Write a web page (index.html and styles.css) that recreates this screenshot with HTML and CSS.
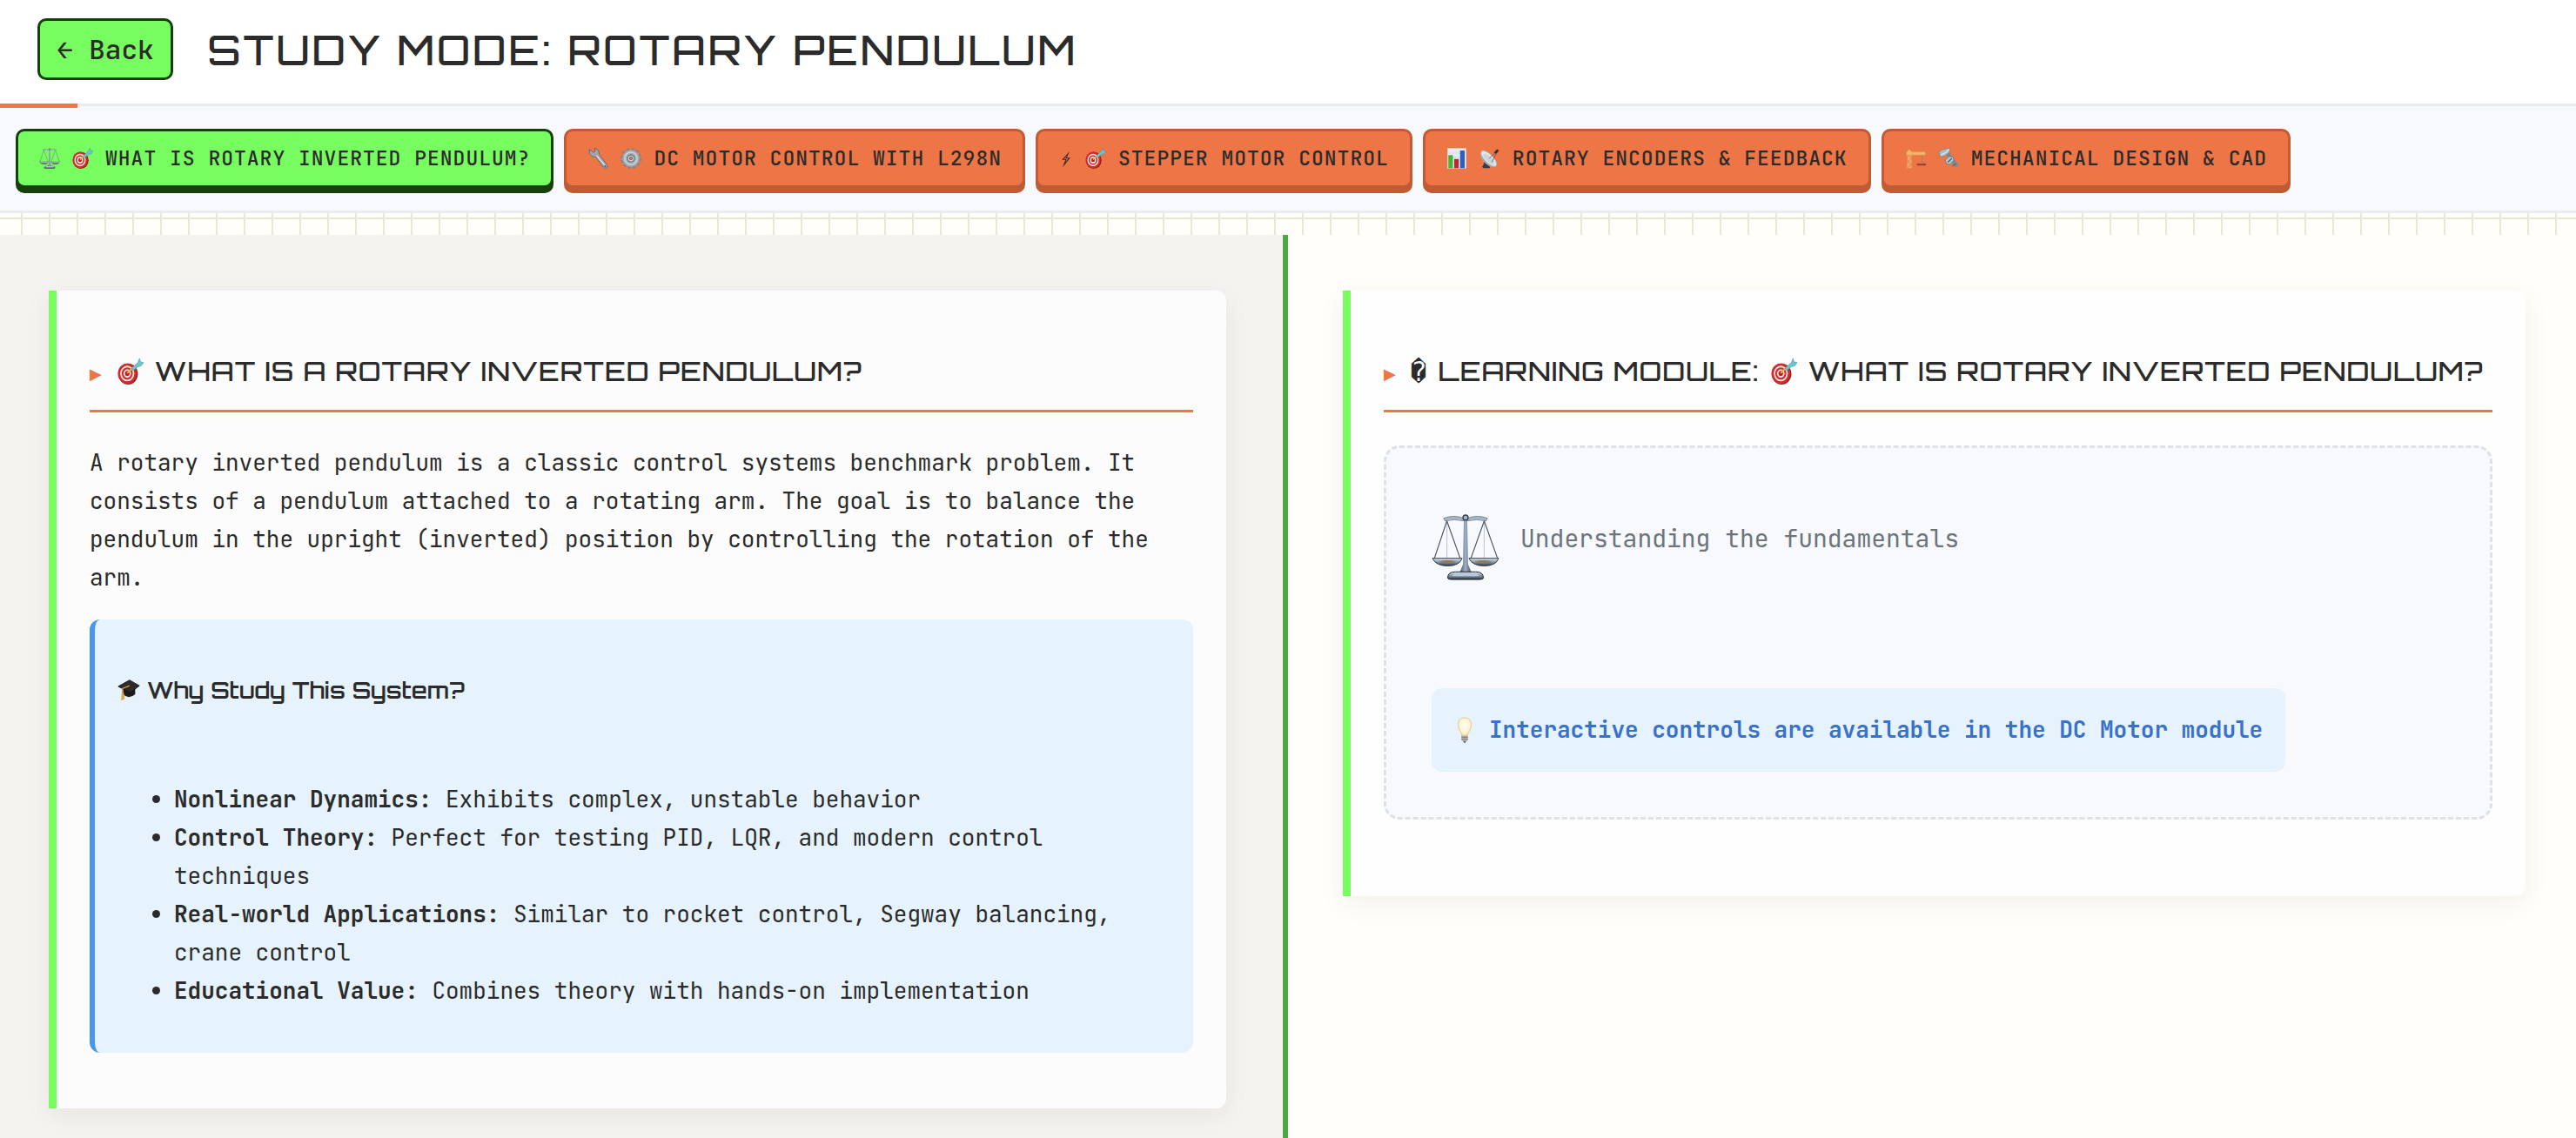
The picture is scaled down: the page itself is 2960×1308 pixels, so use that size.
FILE: index.html
```html
<!DOCTYPE html>
<html lang="en">
<head>
<meta charset="utf-8">
<meta name="viewport" content="width=device-width, initial-scale=1">
<title>Study Mode: Rotary Pendulum</title>
<link rel="stylesheet" href="styles.css">
</head>
<body>
<svg class="sprite" aria-hidden="true">
  <defs>
    <linearGradient id="steel" x1="0" x2="0" y1="0" y2="1">
      <stop offset="0" stop-color="#dfe8f0"/><stop offset=".5" stop-color="#8596aa"/><stop offset="1" stop-color="#2c3440"/>
    </linearGradient>
    <linearGradient id="post" x1="0" x2="1" y1="0" y2="0">
      <stop offset="0" stop-color="#3f4f66"/><stop offset=".5" stop-color="#9fb2ca"/><stop offset="1" stop-color="#3f4f66"/>
    </linearGradient>
    <radialGradient id="glow" cx=".5" cy=".4" r=".6">
      <stop offset="0" stop-color="#fffefa"/><stop offset=".7" stop-color="#fbf3cf"/><stop offset="1" stop-color="#ecd891"/>
    </radialGradient>
  </defs>
  <symbol id="i-scale" viewBox="0 0 80 80">
    <path d="M14 6q12-5 24 0h4q12-5 24 0l-2 3q-11-3-22 0h-4q-11-3-22 0z" fill="#a9b6c4" stroke="#66758a" stroke-width=".8"/>
    <path d="M18 9v45M62 9v45" stroke="#c3ccd8" stroke-width="1.2"/>
    <path d="M18 9L3 54M18 9l16 45M62 9L46 54M62 9l16 45" stroke="#4c5766" stroke-width="1.2" fill="none"/>
    <path d="M38 8h4l1 52 4 10H33l4-10z" fill="url(#post)"/>
    <circle cx="40" cy="5" r="3" fill="#a9b6c4" stroke="#39424f" stroke-width="1.5"/>
    <path d="M1 53h35q-3 9-17 9T1 53zM44 53h35q-3 9-17 9t-18-9z" fill="url(#steel)" stroke="#333c48" stroke-width="1"/>
    <path d="M9 57q10-3 20 0-10 4-20 0zM51 57q10-3 20 0-10 4-20 0z" fill="#8d7a60"/>
    <path d="M19 76q0-7 9-7h24q9 0 9 7 0 2-4 2H23q-4 0-4-2z" fill="url(#steel)" stroke="#1e242c"/>
    <path d="M27 71h26l3 3H24z" fill="#b9c9dd"/>
  </symbol>
  <symbol id="i-target" viewBox="0 0 32 32">
    <ellipse cx="13" cy="19" rx="12" ry="13" fill="#8f1d1c"/>
    <ellipse cx="12" cy="18.5" rx="11.5" ry="12.5" fill="#cf2f2c"/>
    <ellipse cx="12" cy="18.5" rx="8.6" ry="9.6" fill="#fbecec"/>
    <ellipse cx="12" cy="18.5" rx="6.8" ry="7.6" fill="#cf2f2c"/>
    <ellipse cx="12" cy="18.5" rx="4.6" ry="5.2" fill="#fbecec"/>
    <ellipse cx="12" cy="18.5" rx="2.8" ry="3.2" fill="#b8211f"/>
    <path d="M12 18l7-7" stroke="#e7b93f" stroke-width="2"/>
    <path d="M17 12l8-7 2-5 1 4 4 1-3 4-4 1-6 5z" fill="#6cc6cf" stroke="#3e8c99" stroke-width=".6"/>
  </symbol>
  <symbol id="i-wrench" viewBox="0 0 32 32">
    <path d="M3 2l6 5 3-2-1-5 6 4 1 6 12 16q2 4-1 5-3 1-5-2L13 14 7 13 3 9z" fill="#a0a6ac" stroke="#5f656c" stroke-width="1.200"/>
    <path d="M14 12l13 15" stroke="#dde0e4" stroke-width="1.600"/>
    <circle cx="27" cy="28" r="1.300" fill="#54585e"/>
  </symbol>
  <symbol id="i-gear" viewBox="0 0 32 32">
    <circle cx="16" cy="16" r="13.500" fill="none" stroke="#7d858d" stroke-width="5" stroke-dasharray="4.240 2.828"/>
    <circle cx="16" cy="16" r="9" fill="none" stroke="#a3abb2" stroke-width="8"/>
    <circle cx="16" cy="16" r="9.500" fill="none" stroke="#cfd5d9" stroke-width="2"/>
    <circle cx="16" cy="16" r="6" fill="#6a7279"/>
    <circle cx="16" cy="16" r="4.500" fill="#c9ced3"/>
    <circle cx="16" cy="16" r="2.200" fill="#ee7646" stroke="#555b61"/>
  </symbol>
  <symbol id="i-bolt" viewBox="0 0 16 32">
    <path d="M13 6L2 18h5L3 29l11-14H9z" fill="#3a2a22"/>
    <path d="M10 11l-5 6h4l-2 5 4-6H7z" fill="#ee7646"/>
  </symbol>
  <symbol id="i-chart" viewBox="0 0 32 32">
    <rect x="2" y="1" width="28" height="30" fill="#e6ecf4" stroke="#d3d9e2"/>
    <path d="M3 8h26M3 14h26M3 20h26" stroke="#cdd6e2"/>
    <rect x="3" y="11" width="7" height="20" fill="#4fae34"/>
    <rect x="12" y="17" width="7" height="14" fill="#b52a2e"/>
    <rect x="21" y="4" width="7" height="27" fill="#2d5fc0"/>
  </symbol>
  <symbol id="i-dish" viewBox="0 0 32 32">
    <path d="M6 18l1 6-3 5 2 2h10l-1-6z" fill="#353c44"/>
    <g transform="rotate(45 14 16)">
      <path d="M-1 16q1 9 15 9t16-9z" fill="#a4a9ae"/>
      <ellipse cx="14.500" cy="16" rx="16" ry="6.500" fill="#e3e5e6" stroke="#a1a6ab"/>
      <ellipse cx="15" cy="16.500" rx="11" ry="4" fill="#d0d3d6"/>
    </g>
    <path d="M15 16L27 5M19 22l7-15" stroke="#5b6167" stroke-width="1.200"/>
    <path d="M22 7l5-5 3 2-4 5z" fill="#3a2a26"/>
  </symbol>
  <symbol id="i-crane" viewBox="0 0 32 32">
    <path d="M4 7h6v24H3z" fill="#f0a763"/>
    <path d="M4 11l6 5-6 5 6 5-6 4" stroke="#cf7c3e" fill="none"/>
    <path d="M2 7l4-5 5 4h20v5H2z" fill="#f2b56b" stroke="#d99150"/>
    <path d="M26 11v12M22 24l4-4 4 4" stroke="#a9805f" stroke-width="1.200" fill="none"/>
    <path d="M18 24h14v3H18z" fill="#9c4433"/>
  </symbol>
  <symbol id="i-nut" viewBox="0 0 32 32">
    <path d="M12 10l5-3 14 18q0 4-5 5z" fill="#7f888f"/>
    <path d="M18 14l-5 4M23 20l-5 4M27 24l-5 4" stroke="#3f474d" stroke-width="1.200"/>
    <path d="M1 7l5-4 8-2 4 1-1 5-6 5-7 2z" fill="#a9bcc6" stroke="#6d7e88" stroke-width=".8"/>
    <path d="M4 11l8-4 5-5" stroke="#e3ecf0" stroke-width="1.500" fill="none"/>
    <path d="M11 19l6-6 6 1 1 5-5 6-6 0z" fill="#b3c1ca" stroke="#5b6a74" stroke-width=".8"/>
    <path d="M15 22l6-6" stroke="#48545d" stroke-width="1.500"/>
  </symbol>
  <symbol id="i-cap" viewBox="0 0 32 32">
    <path d="M8 13v9q8 8 17 0v-9z" fill="#1c1c1c"/>
    <path d="M1 11L17 2l14 8-13 10z" fill="#2b2b2b" stroke="#0f0f0f"/>
    <path d="M17 10L7 14v8" stroke="#d99a3b" stroke-width="1.800" fill="none"/>
    <path d="M6 20h3l1 9-5 2z" fill="#e0a548"/>
  </symbol>
  <symbol id="i-bulb" viewBox="4 0 24 32">
    <path d="M16 1q8 0 8 9 0 5-4 10l-1 4h-6l-1-4q-4-5-4-10 0-9 8-9z" fill="url(#glow)" stroke="#e3cb7c"/>
    <path d="M12 23h8v5l-2 2h-4l-2-2z" fill="#b0b0b0"/>
    <path d="M12 25h8M12 27.500h8" stroke="#7c7c7c"/>
    <path d="M14 30h4l-2 2z" fill="#333"/>
  </symbol>
</svg>

<header class="topbar">
  <button class="back" type="button">← Back</button>
  <h1 class="title">STUDY MODE: ROTARY PENDULUM</h1>
  <div class="progress"></div>
</header>

<nav class="tabs">
  <button class="tab tab-active" type="button"><svg class="icon"><use href="#i-scale"/></svg><svg class="icon"><use href="#i-target"/></svg>WHAT IS ROTARY INVERTED PENDULUM?</button>
  <button class="tab" type="button"><svg class="icon"><use href="#i-wrench"/></svg><svg class="icon"><use href="#i-gear"/></svg>DC MOTOR CONTROL WITH L298N</button>
  <button class="tab" type="button"><svg class="icon icon-narrow"><use href="#i-bolt"/></svg><svg class="icon"><use href="#i-target"/></svg>STEPPER MOTOR CONTROL</button>
  <button class="tab" type="button"><svg class="icon"><use href="#i-chart"/></svg><svg class="icon"><use href="#i-dish"/></svg>ROTARY ENCODERS &amp; FEEDBACK</button>
  <button class="tab" type="button"><svg class="icon"><use href="#i-crane"/></svg><svg class="icon"><use href="#i-nut"/></svg>MECHANICAL DESIGN &amp; CAD</button>
</nav>

<div class="grid-strip"></div>

<main class="panels">
  <section class="panel panel-theory">
    <article class="card">
      <h2 class="heading"><svg class="icon icon-heading"><use href="#i-target"/></svg>WHAT IS A ROTARY INVERTED PENDULUM?</h2>
      <p class="text">A rotary inverted pendulum is a classic control systems benchmark problem. It consists of a pendulum attached to a rotating arm. The goal is to balance the pendulum in the upright (inverted) position by controlling the rotation of the arm.</p>
      <div class="callout">
        <h3 class="subheading"><svg class="icon icon-cap"><use href="#i-cap"/></svg>Why Study This System?</h3>
        <ul class="reasons">
          <li><strong>Nonlinear Dynamics:</strong> Exhibits complex, unstable behavior</li>
          <li><strong>Control Theory:</strong> Perfect for testing PID, LQR, and modern control techniques</li>
          <li><strong>Real-world Applications:</strong> Similar to rocket control, Segway balancing, crane control</li>
          <li><strong>Educational Value:</strong> Combines theory with hands-on implementation</li>
        </ul>
      </div>
    </article>
  </section>
  <section class="panel panel-demo">
    <article class="card">
      <h2 class="heading"><span class="unknown">�</span>LEARNING MODULE:<svg class="icon icon-heading"><use href="#i-target"/></svg>WHAT IS ROTARY INVERTED PENDULUM?</h2>
      <div class="demo">
        <div class="demo-intro"><svg class="icon-large"><use href="#i-scale"/></svg><span>Understanding the fundamentals</span></div>
        <p class="hint"><svg class="icon icon-bulb"><use href="#i-bulb"/></svg>Interactive controls are available in the DC Motor module</p>
      </div>
    </article>
  </section>
</main>
</body>
</html>
```
FILE: styles.css
```css
:root {
  --ink: #2b2b2b;
  --green: #78fd60;
  --green-dark: #163f0c;
  --orange: #ee7646;
  --orange-dark: #bf5b35;
  --line: #e9ecef;
  --paper: #fffef8;
  --sky: #e6f3fd;
  --mono: "JetBrains Mono", "DejaVu Sans Mono", monospace;
  --display: Orbitron, "DejaVu Sans", sans-serif;
}

* { box-sizing: border-box; }

body {
  margin: 0;
  min-height: 100vh;
  display: flex;
  flex-direction: column;
  background: var(--paper);
  color: var(--ink);
  font-family: var(--mono);
  font-size: 26px;
  line-height: 44px;
}

h1, h2, h3, p, ul { margin: 0; }
h1, h2, h3 { font-family: var(--display); font-weight: 500; }

button {
  color: var(--ink);
  font-family: var(--mono);
  font-weight: 500;
  cursor: pointer;
}

.sprite { position: absolute; width: 0; height: 0; }
.icon { width: 24px; height: 26px; flex: none; }
.icon-narrow { width: 16px; }
.icon-cap { width: 26px; }
.icon-bulb { height: 30px; }
.icon-heading { width: 32px; height: 30px; }
.icon-large { width: 78px; height: 78px; flex: none; }

/* header */
.topbar {
  position: relative;
  display: flex;
  align-items: center;
  gap: 40px;
  padding: 21px 43px 27px;
  background: #fff;
  border-bottom: 3px solid var(--line);
}
.back {
  padding: 10px 19px;
  border: 3px solid var(--green-dark);
  border-radius: 10px;
  background: var(--green);
  font-size: 31px;
  line-height: 45px;
}
.title {
  font-size: 46px;
  line-height: 64px;
  letter-spacing: 3px;
}
.progress {
  position: absolute;
  left: 0;
  bottom: -5px;
  width: 3%;
  height: 5px;
  background: var(--orange);
}

/* module tabs */
.tabs {
  display: flex;
  gap: 12px;
  padding: 26px 18px;
  background: #f8f9fc;
  border-bottom: 3px solid var(--line);
}
.tab {
  display: flex;
  align-items: center;
  gap: 14px;
  padding: 16px 24px;
  border: 3px solid var(--orange-dark);
  border-radius: 10px;
  background: var(--orange);
  box-shadow: 0 6px 0 var(--orange-dark);
  font-size: 23px;
  line-height: 30px;
  letter-spacing: 1px;
  white-space: nowrap;
}
.tab-active {
  border-color: var(--green-dark);
  background: var(--green);
  box-shadow: 0 6px 0 var(--green-dark);
}

/* graph-paper strip */
.grid-strip {
  height: 25px;
  background:
    linear-gradient(#e8e8d8, #e8e8d8) 0 5px / 100% 2px no-repeat,
    repeating-linear-gradient(90deg, transparent 0 24px, #e8e8d8 24px 26px, transparent 26px 32px);
}

/* panels */
.panels {
  flex: 1;
  display: grid;
  grid-template-columns: 1fr 1fr;
}
.panel { min-width: 0; padding: 64px 58px 32px 63px; }
.panel-theory {
  padding: 64px 65px 32px 56px;
  background: #f4f3ef;
  border-right: 6px solid #4ca747;
}
.card {
  padding: 64px 38px;
  border-left: 9px solid var(--green);
  border-radius: 0 12px 12px 0;
  background: #fefefe;
  box-shadow: 0 8px 32px rgba(0, 0, 0, .06);
}
.panel-theory .card { background: #fcfcfc; }

.heading {
  display: flex;
  align-items: center;
  gap: 12px;
  padding: 7px 0 22px;
  border-bottom: 3px solid var(--orange);
  font-size: 31px;
  line-height: 44px;
  letter-spacing: 1px;
  white-space: nowrap;
}
.heading::before {
  content: "▶";
  margin-right: 4px;
  padding-top: 4px;
  color: var(--orange);
  font-size: 18px;
  line-height: 36px;
}
.unknown { font-family: var(--mono); }

.text { margin: 36px 0 26px; }

.callout {
  padding: 59px 26px 49px 26px;
  border-left: 6px solid #4996f0;
  border-radius: 12px;
  background: var(--sky);
}
.subheading {
  display: flex;
  align-items: center;
  gap: 8px;
  margin-bottom: 82px;
  font-size: 26px;
  font-weight: 600;
}
.reasons { padding-left: 65px; }

.demo {
  margin: 38px 0 24px;
  padding: 52px;
  border: 3px dashed #dee2e6;
  border-radius: 18px;
  background: #f8f9fc;
}
.demo-intro {
  display: flex;
  gap: 24px;
  min-height: 224px;
  padding-top: 23px;
  color: #6c757d;
  font-size: 28px;
  line-height: 58px;
}
.hint {
  display: flex;
  align-items: center;
  gap: 16px;
  width: fit-content;
  padding: 26px;
  border-radius: 12px;
  background: var(--sky);
  color: #3871cb;
  font-weight: 600;
}
```
